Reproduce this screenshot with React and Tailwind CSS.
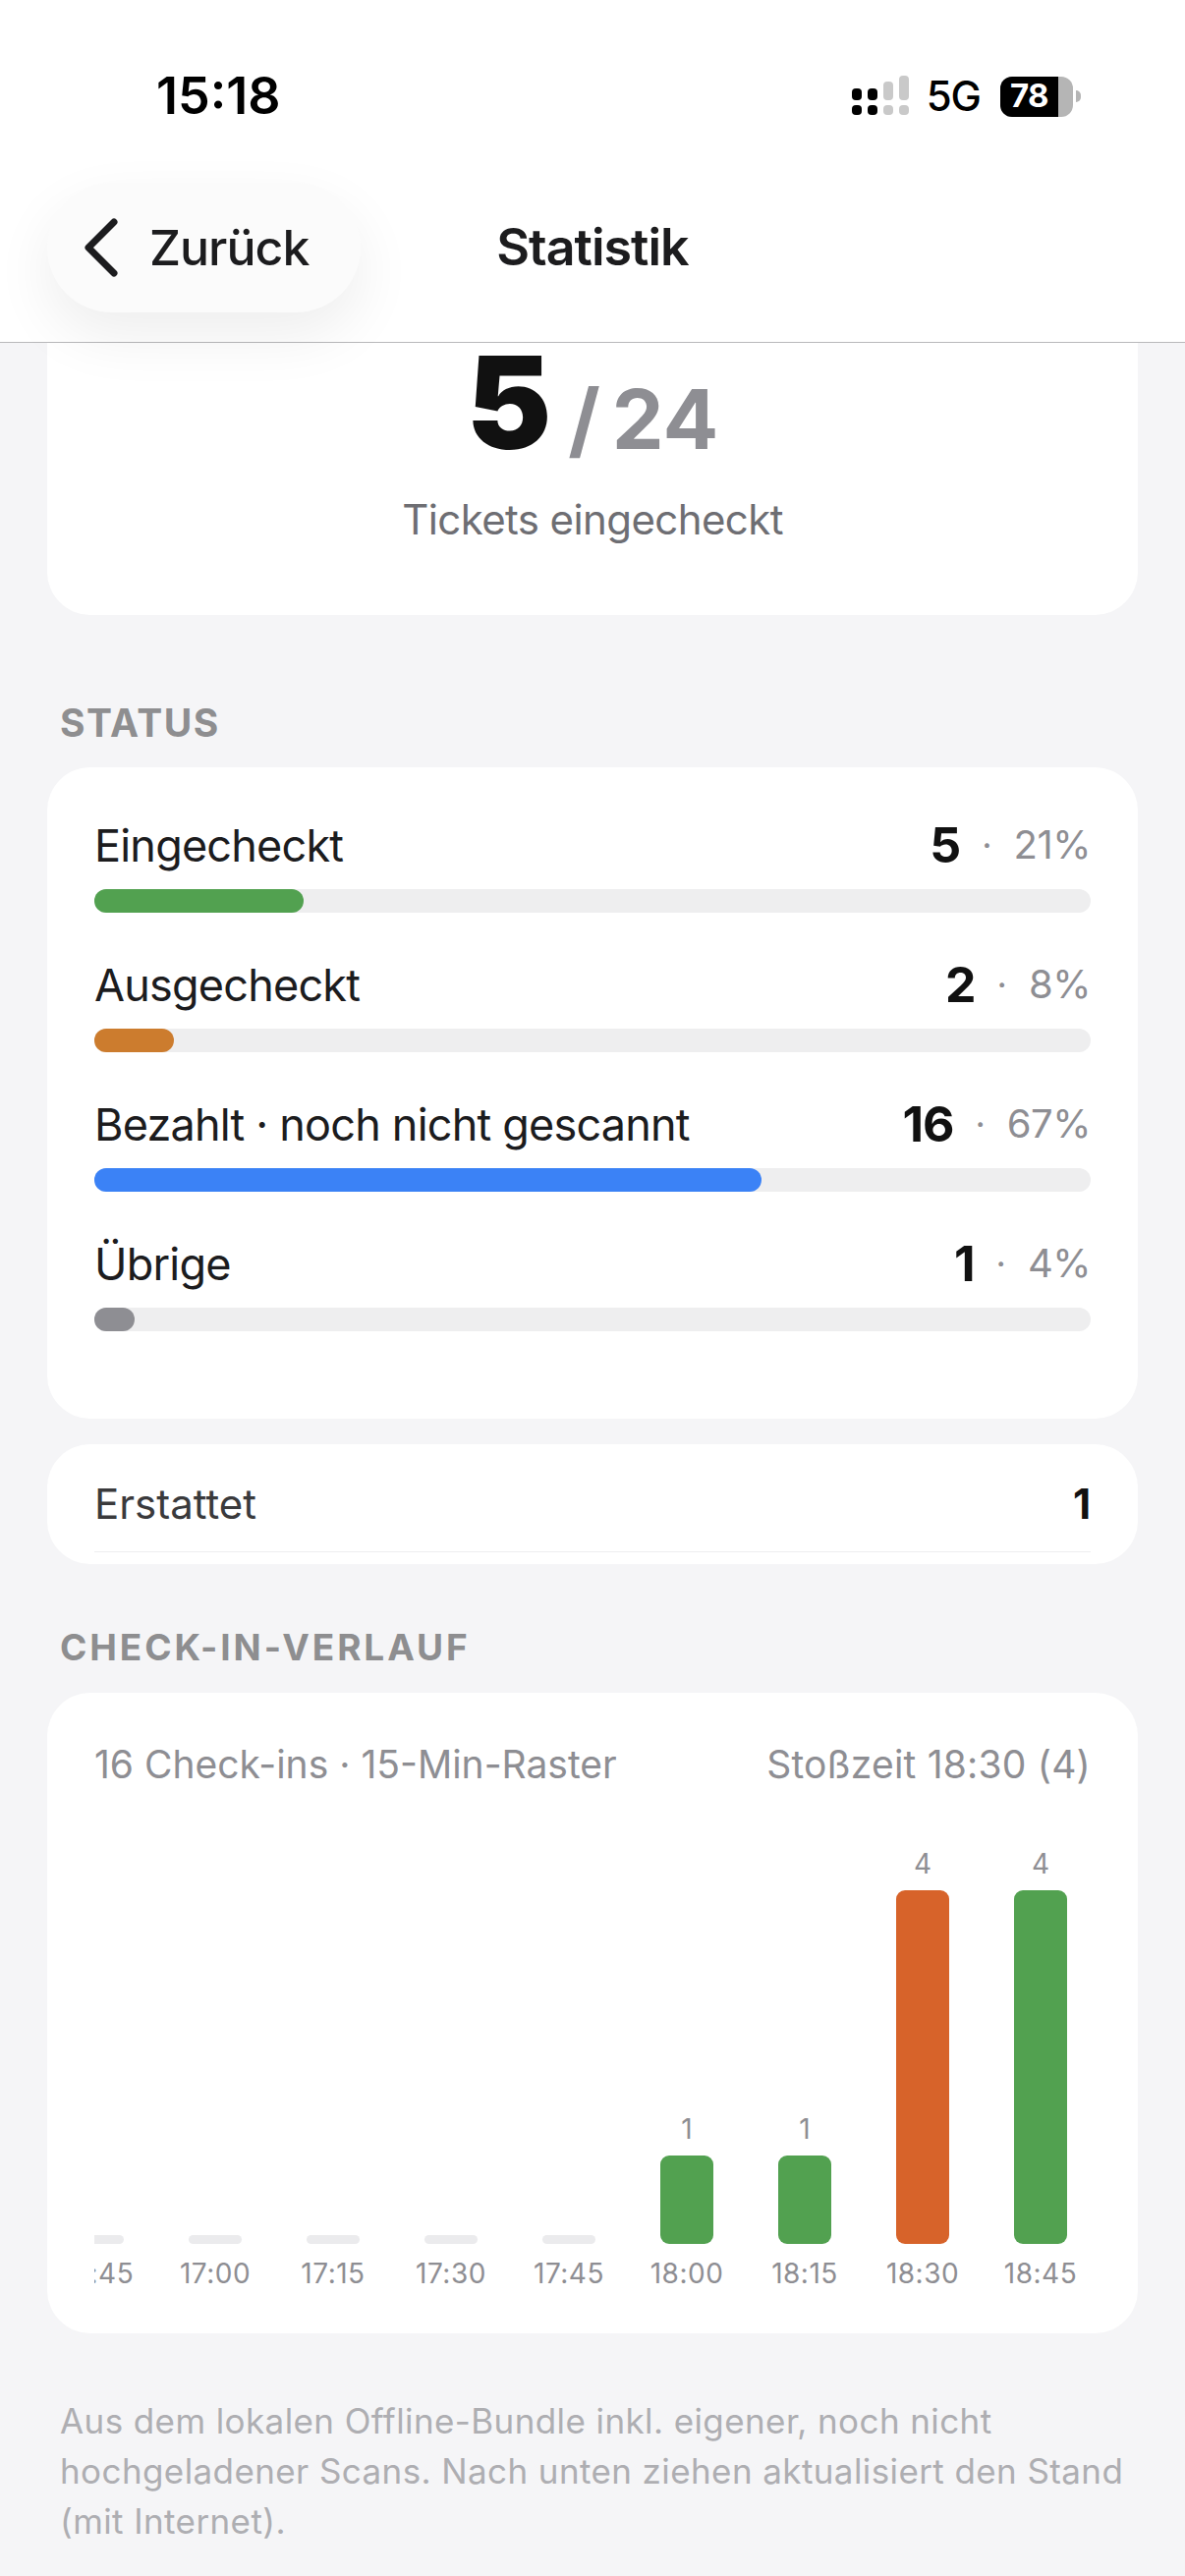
import React from "react";

const statusRows = [
  { label: "Eingecheckt", count: 5, pct: "21%", width: "w-[213px]", color: "bg-[#52a150]" },
  { label: "Ausgecheckt", count: 2, pct: "8%", width: "w-[81px]", color: "bg-[#cc7c2e]" },
  { label: "Bezahlt · noch nicht gescannt", count: 16, pct: "67%", width: "w-[679px]", color: "bg-[#3b82f6]" },
  { label: "Übrige", count: 1, pct: "4%", width: "w-[41px]", color: "bg-[#8e8e93]" },
];

const bars = [
  { time: "16:45", h: "h-[9px]", color: "bg-[#ebebed]" },
  { time: "17:00", h: "h-[9px]", color: "bg-[#ebebed]" },
  { time: "17:15", h: "h-[9px]", color: "bg-[#ebebed]" },
  { time: "17:30", h: "h-[9px]", color: "bg-[#ebebed]" },
  { time: "17:45", h: "h-[9px]", color: "bg-[#ebebed]" },
  { time: "18:00", value: 1, h: "h-[90px]", color: "bg-[#52a150]" },
  { time: "18:15", value: 1, h: "h-[90px]", color: "bg-[#52a150]" },
  { time: "18:30", value: 4, h: "h-[360px]", color: "bg-[#d7632a]" },
  { time: "18:45", value: 4, h: "h-[360px]", color: "bg-[#52a150]" },
];

function SignalIcon() {
  return (
    <svg width="60" height="42" viewBox="0 0 60 42">
      <rect x="1" y="13" width="10" height="12" rx="4" fill="#000" />
      <rect x="1" y="30" width="10" height="10" rx="4" fill="#000" />
      <rect x="17" y="13" width="10" height="12" rx="4" fill="#000" />
      <rect x="17" y="30" width="10" height="10" rx="4" fill="#000" />
      <rect x="33" y="6" width="10" height="19" rx="4" fill="#c9c9c9" />
      <rect x="33" y="30" width="10" height="10" rx="4" fill="#c9c9c9" />
      <rect x="49" y="0" width="10" height="25" rx="4" fill="#c9c9c9" />
      <rect x="49" y="30" width="10" height="10" rx="4" fill="#c9c9c9" />
    </svg>
  );
}

function Battery() {
  return (
    <div className="flex items-center">
      <div className="flex h-[41px] w-[74px] overflow-hidden rounded-[12px] bg-[#b5b5b5]">
        <div className="flex w-[59px] items-center justify-center bg-black text-[33px] font-bold tracking-[-0.5px] text-white">78</div>
      </div>
      <div className="ml-[3px] h-[12px] w-[5px] rounded-r-full bg-[#b5b5b5]" />
    </div>
  );
}

function SectionTitle({ children, className }) {
  return <div className={`px-[61px] font-bold uppercase text-[#8e8e90] ${className}`}>{children}</div>;
}

export default function App() {
  return (
    <div className="min-h-[2622px] bg-[#f5f5f7] text-[#111111] font-['Inter','Liberation_Sans',sans-serif]">
      <header className="relative z-10 h-[349px] border-b border-[#b9b9bb] bg-white">
        <div className="flex h-[186px] items-start justify-between pl-[159px] pr-[106px] pt-[70px]">
          <div className="text-[52px] font-semibold leading-[56px] tracking-normal text-black">15:18</div>
          <div className="flex items-center pt-[7px]">
            <SignalIcon />
            <div className="ml-[17px] mr-[20px] text-[42px] font-medium leading-[42px] tracking-[-1px] text-black">5G</div>
            <Battery />
          </div>
        </div>
        <div className="relative flex h-[132px] items-center">
          <button className="ml-[48px] flex h-[132px] w-[319px] items-center rounded-[66px] bg-[#fbfbfb] pl-[36px] text-[#1c1c1e] shadow-[0_24px_60px_rgba(0,0,0,0.07)]">
            <svg width="44" height="60" viewBox="0 0 44 60" fill="none">
              <path d="M32 4 L6 30 L32 56" stroke="#1c1c1e" strokeWidth="7" strokeLinecap="round" strokeLinejoin="round" />
            </svg>
            <span className="ml-[24px] text-[50px] font-medium leading-none tracking-[-1px]">Zurück</span>
          </button>
          <div className="absolute left-0 right-0 top-1/2 -translate-y-1/2 text-center text-[52px] font-semibold leading-none tracking-[-1px] text-[#1c1c1e]">Statistik</div>
        </div>
      </header>

      <main>
        <section className="mx-[48px] flex h-[277px] flex-col items-center rounded-b-[44px] bg-white pt-[3px]">
          <div className="flex items-baseline leading-none">
            <span className="text-[130px] font-black leading-[116px] text-[#111111]">5</span>
            <span className="ml-[17px] text-[84px] font-bold leading-[116px] text-[#8e8e93] [word-spacing:-8px]">/ 24</span>
          </div>
          <div className="mt-[19px] text-[42px] leading-[50px] tracking-[-0.6px] text-[#6e6e73]">Tickets eingecheckt</div>
        </section>

        <SectionTitle className="mt-[88px] text-[39px] leading-[44px] tracking-[1.5px]">Status</SectionTitle>

        <section className="mx-[48px] mt-[23px] h-[663px] rounded-[44px] bg-white px-[48px] pt-[52px]">
          <div className="flex flex-col gap-[46px]">
            {statusRows.map((row) => (
              <div key={row.label}>
                <div className="flex h-[54px] items-center justify-between">
                  <span className="text-[45px] leading-none tracking-[-0.8px] text-[#1c1c1e]">{row.label}</span>
                  <span className="flex items-center">
                    <span className="text-[50px] font-bold leading-none tracking-[-1px] text-[#111111]">{row.count}</span>
                    <span className="mx-[22px] text-[36px] leading-none text-[#8e8e93]">·</span>
                    <span className="text-[40px] leading-none tracking-[-0.5px] text-[#8e8e93]">{row.pct}</span>
                  </span>
                </div>
                <div className="mt-[18px] h-[24px] rounded-full bg-[#eeeeef]">
                  <div className={`h-[24px] rounded-full ${row.width} ${row.color}`} />
                </div>
              </div>
            ))}
          </div>
        </section>

        <section className="mx-[48px] mt-[26px] h-[122px] rounded-[44px] bg-white px-[48px]">
          <div className="flex h-[110px] items-center justify-between border-b border-[#eeeeef] pt-[12px]">
            <span className="text-[42px] leading-none text-[#3a3a3c]">Erstattet</span>
            <span className="text-[42px] font-bold leading-none text-[#111111]">1</span>
          </div>
        </section>

        <SectionTitle className="mt-[63px] text-[37px] leading-[44px] tracking-[2.9px]">Check-in-Verlauf</SectionTitle>

        <section className="mx-[48px] mt-[24px] h-[652px] rounded-[44px] bg-white pt-[48px]">
          <div className="flex h-[48px] items-center justify-between px-[48px] text-[39px] leading-none text-[#8e8e93]">
            <span>16 Check-ins · 15-Min-Raster</span>
            <span className="tracking-[0.2px]">Stoßzeit 18:30 (4)</span>
          </div>
          <div className="mx-[48px] mt-[62px] flex items-end justify-end gap-[24px] overflow-hidden pr-[3px]">
            {bars.map((bar) => (
              <div key={bar.time} className="flex w-[96px] shrink-0 flex-col items-center">
                {bar.value && <div className="mb-[11px] text-[28px] leading-[32px] text-[#8e8e93]">{bar.value}</div>}
                <div className={`w-[54px] rounded-t-[9px] rounded-b-[9px] ${bar.h} ${bar.color}`} />
                <div className="mt-[13px] h-[34px] text-[28px] leading-[34px] tracking-[0.5px] text-[#8e8e93]">{bar.time}</div>
              </div>
            ))}
          </div>
        </section>

        <p className="mx-[61px] mt-[64px] text-[35px] leading-[51px] tracking-[0.4px] text-[#aeaeb2]">
          Aus dem lokalen Offline-Bundle inkl. eigener, noch nicht hochgeladener Scans. Nach unten ziehen aktualisiert den Stand (mit Internet).
        </p>
      </main>
    </div>
  );
}
